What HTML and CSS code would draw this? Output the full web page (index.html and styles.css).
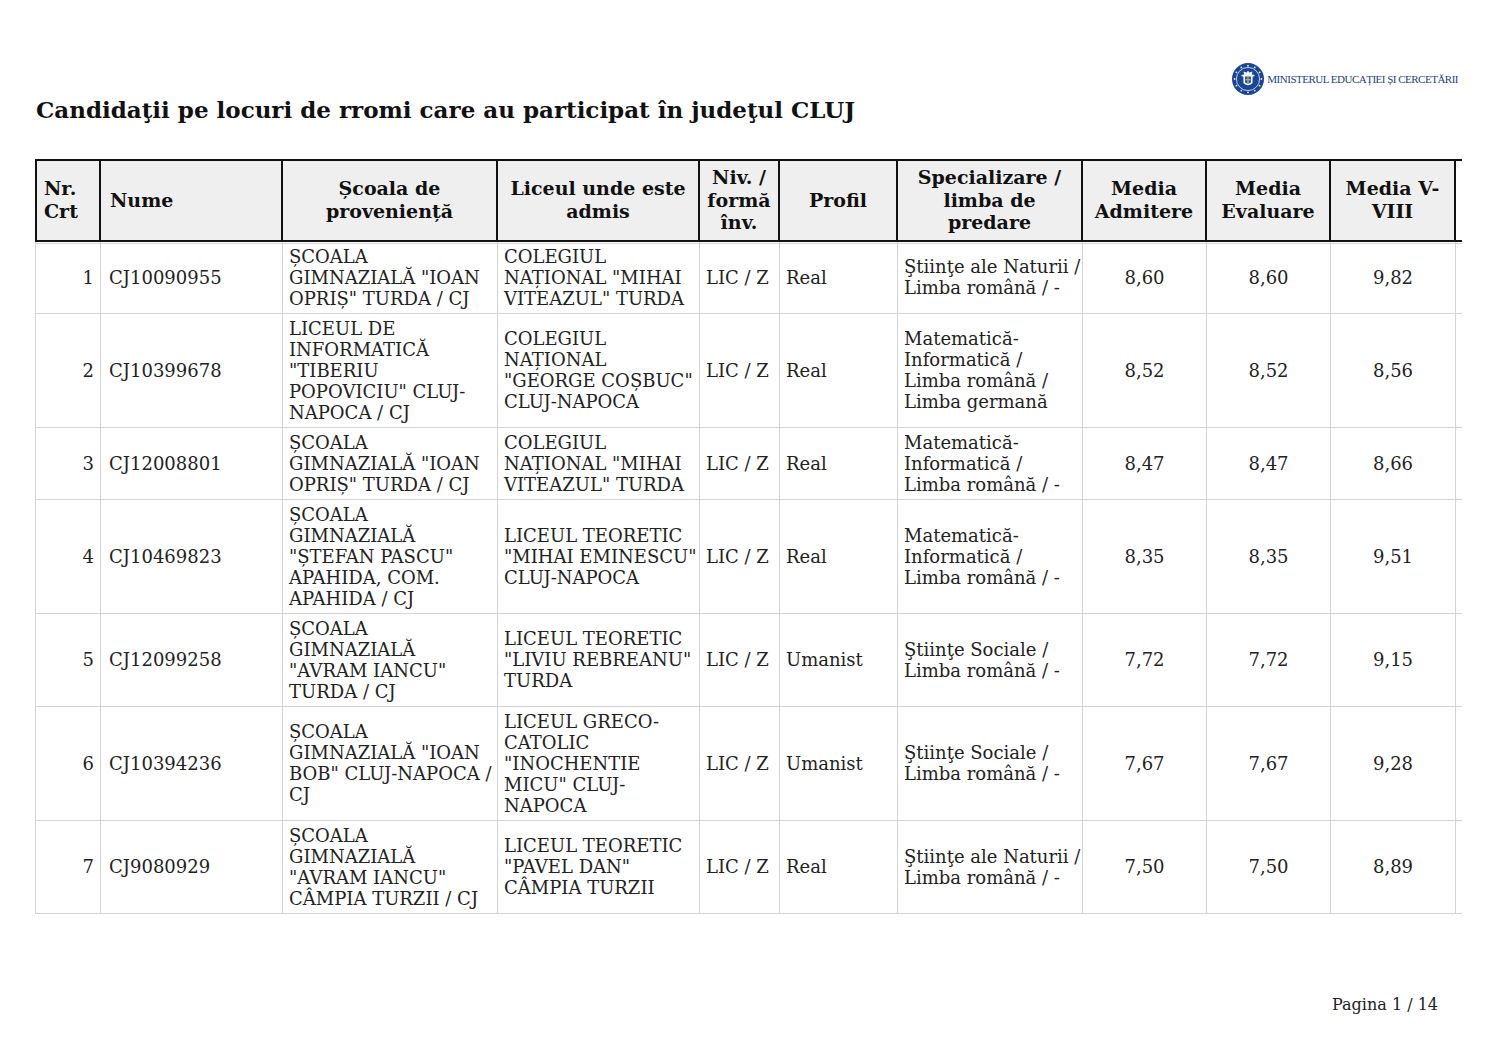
FILE: index.html
```html
<!DOCTYPE html>
<html lang="ro">
<head>
<meta charset="utf-8">
<title>Candidaţii pe locuri de rromi - CLUJ</title>
<link rel="stylesheet" href="styles.css">
</head>
<body>
<div class="page">
  <div class="brand">
    <svg class="emblem" viewBox="0 0 32 32" width="32" height="32" aria-hidden="true">
      <circle cx="16" cy="16" r="16" fill="#1a4595"/>
      <circle cx="16" cy="16" r="11.6" fill="none" stroke="#d5dff1" stroke-width="0.9"/>
      <g fill="#e6ecf7">
        <circle cx="16" cy="2.6" r="0.9"/><circle cx="22.7" cy="4.4" r="0.9"/><circle cx="27.6" cy="9.3" r="0.9"/>
        <circle cx="29.4" cy="16" r="0.9"/><circle cx="27.6" cy="22.7" r="0.9"/><circle cx="22.7" cy="27.6" r="0.9"/>
        <circle cx="16" cy="29.4" r="0.9"/><circle cx="9.3" cy="27.6" r="0.9"/><circle cx="4.4" cy="22.7" r="0.9"/>
        <circle cx="2.6" cy="16" r="0.9"/><circle cx="4.4" cy="9.3" r="0.9"/><circle cx="9.3" cy="4.4" r="0.9"/>
      </g>
      <path d="M16 7.5 L17.2 9.5 L20.5 8.6 L19.8 11.5 L23 12 L20.6 14.2 L20.6 20 Q16 24.5 11.4 20 L11.4 14.2 L9 12 L12.2 11.5 L11.5 8.6 L14.8 9.5 Z" fill="#f1f4fa"/>
      <path d="M13 13.5 H19 V19.2 Q16 22 13 19.2 Z" fill="#2a5aa8"/>
      <path d="M16 14 V20.5 M13.4 16.8 H18.6" stroke="#e9c84a" stroke-width="0.9"/>
    </svg>
    <span class="brand-name">MINISTERUL EDUCAȚIEI ȘI CERCETĂRII</span>
  </div>

  <h1 class="title">Candidaţii pe locuri de rromi care au participat în judeţul CLUJ</h1>

  <table class="results">
    <colgroup>
      <col class="c-nr"><col class="c-nume"><col class="c-scoala"><col class="c-liceu"><col class="c-niv"><col class="c-profil"><col class="c-spec"><col class="c-media"><col class="c-media"><col class="c-media3"><col class="c-cut">
    </colgroup>
    <thead>
      <tr>
        <th class="left">Nr.<br>Crt</th>
        <th class="left name-h">Nume</th>
        <th>Școala de<br>proveniență</th>
        <th>Liceul unde este<br>admis</th>
        <th>Niv. /<br>formă<br>înv.</th>
        <th>Profil</th>
        <th>Specializare /<br>limba de<br>predare</th>
        <th>Media<br>Admitere</th>
        <th>Media<br>Evaluare</th>
        <th>Media V-<br>VIII</th>
        <th class="cut"></th>
      </tr>
    </thead>
    <tbody>
      <tr>
        <td class="nr">1</td><td class="nume">CJ10090955</td>
        <td>ȘCOALA<br>GIMNAZIALĂ "IOAN<br>OPRIȘ" TURDA / CJ</td>
        <td>COLEGIUL<br>NAȚIONAL "MIHAI<br>VITEAZUL" TURDA</td>
        <td>LIC / Z</td><td>Real</td>
        <td>Ştiinţe ale Naturii /<br>Limba română / -</td>
        <td class="num">8,60</td><td class="num">8,60</td><td class="num">9,82</td><td class="cut"></td>
      </tr>
      <tr>
        <td class="nr">2</td><td class="nume">CJ10399678</td>
        <td>LICEUL DE<br>INFORMATICĂ<br>"TIBERIU<br>POPOVICIU" CLUJ-<br>NAPOCA / CJ</td>
        <td>COLEGIUL<br>NAȚIONAL<br>"GEORGE COȘBUC"<br>CLUJ-NAPOCA</td>
        <td>LIC / Z</td><td>Real</td>
        <td>Matematică-<br>Informatică /<br>Limba română /<br>Limba germană</td>
        <td class="num">8,52</td><td class="num">8,52</td><td class="num">8,56</td><td class="cut"></td>
      </tr>
      <tr>
        <td class="nr">3</td><td class="nume">CJ12008801</td>
        <td>ȘCOALA<br>GIMNAZIALĂ "IOAN<br>OPRIȘ" TURDA / CJ</td>
        <td>COLEGIUL<br>NAȚIONAL "MIHAI<br>VITEAZUL" TURDA</td>
        <td>LIC / Z</td><td>Real</td>
        <td>Matematică-<br>Informatică /<br>Limba română / -</td>
        <td class="num">8,47</td><td class="num">8,47</td><td class="num">8,66</td><td class="cut"></td>
      </tr>
      <tr>
        <td class="nr">4</td><td class="nume">CJ10469823</td>
        <td>ȘCOALA<br>GIMNAZIALĂ<br>"ȘTEFAN PASCU"<br>APAHIDA, COM.<br>APAHIDA / CJ</td>
        <td>LICEUL TEORETIC<br>"MIHAI EMINESCU"<br>CLUJ-NAPOCA</td>
        <td>LIC / Z</td><td>Real</td>
        <td>Matematică-<br>Informatică /<br>Limba română / -</td>
        <td class="num">8,35</td><td class="num">8,35</td><td class="num">9,51</td><td class="cut"></td>
      </tr>
      <tr>
        <td class="nr">5</td><td class="nume">CJ12099258</td>
        <td>ȘCOALA<br>GIMNAZIALĂ<br>"AVRAM IANCU"<br>TURDA / CJ</td>
        <td>LICEUL TEORETIC<br>"LIVIU REBREANU"<br>TURDA</td>
        <td>LIC / Z</td><td>Umanist</td>
        <td>Ştiinţe Sociale /<br>Limba română / -</td>
        <td class="num">7,72</td><td class="num">7,72</td><td class="num">9,15</td><td class="cut"></td>
      </tr>
      <tr>
        <td class="nr">6</td><td class="nume">CJ10394236</td>
        <td>ȘCOALA<br>GIMNAZIALĂ "IOAN<br>BOB" CLUJ-NAPOCA /<br>CJ</td>
        <td>LICEUL GRECO-<br>CATOLIC<br>"INOCHENTIE<br>MICU" CLUJ-<br>NAPOCA</td>
        <td>LIC / Z</td><td>Umanist</td>
        <td>Ştiinţe Sociale /<br>Limba română / -</td>
        <td class="num">7,67</td><td class="num">7,67</td><td class="num">9,28</td><td class="cut"></td>
      </tr>
      <tr>
        <td class="nr">7</td><td class="nume">CJ9080929</td>
        <td>ȘCOALA<br>GIMNAZIALĂ<br>"AVRAM IANCU"<br>CÂMPIA TURZII / CJ</td>
        <td>LICEUL TEORETIC<br>"PAVEL DAN"<br>CÂMPIA TURZII</td>
        <td>LIC / Z</td><td>Real</td>
        <td>Ştiinţe ale Naturii /<br>Limba română / -</td>
        <td class="num">7,50</td><td class="num">7,50</td><td class="num">8,89</td><td class="cut"></td>
      </tr>
    </tbody>
  </table>

  <footer class="footer">Pagina 1 / 14</footer>
</div>
</body>
</html>
```

FILE: styles.css
```css
* { box-sizing: border-box; }

html, body {
  margin: 0;
  padding: 0;
  background: #ffffff;
}

body {
  font-family: "DejaVu Serif", "Liberation Serif", serif;
  color: #222;
}

.page {
  width: 1497px;
  height: 1058px;
  display: flex;
  flex-direction: column;
  padding: 63px 39px 44px 35px;
  overflow: hidden;
}

.brand {
  display: flex;
  align-items: center;
  justify-content: flex-end;
  gap: 3px;
  height: 32px;
}

.emblem {
  display: block;
  flex: none;
}

.brand-name {
  font-family: "Liberation Serif", "DejaVu Serif", serif;
  font-size: 11px;
  letter-spacing: -0.5px;
  color: #1d3f86;
  white-space: nowrap;
}

.title {
  margin: 1px 0 0 1px;
  font-size: 23px;
  line-height: 27px;
  font-weight: bold;
  color: #111;
  white-space: nowrap;
}

.results {
  margin-top: 36px;
  border-collapse: separate;
  border-spacing: 0;
  table-layout: fixed;
  width: 1427px;
}

.c-nr { width: 66px; }
.c-nume { width: 182px; }
.c-scoala { width: 215px; }
.c-liceu { width: 202px; }
.c-niv { width: 80px; }
.c-profil { width: 118px; }
.c-spec { width: 185px; }
.c-media { width: 124px; }
.c-media3 { width: 125px; }
.c-cut { width: 6px; }

.results th {
  background: #efefef;
  font-size: 19px;
  line-height: 22.5px;
  font-weight: bold;
  text-align: center;
  vertical-align: middle;
  padding: 5px 6px 6px;
  border-top: 2px solid #111;
  border-bottom: 2px solid #111;
  border-right: 2px solid #111;
  white-space: nowrap;
  color: #111;
}

.results th:first-child {
  border-left: 2px solid #111;
}

.results th.left {
  text-align: left;
  padding-left: 7px;
}

.results th.cut {
  background: #fff;
  border-right: none;
  padding: 0;
}

.results td {
  font-size: 18px;
  line-height: 21px;
  padding: 4px 6px 4px;
  vertical-align: middle;
  text-align: left;
  white-space: nowrap;
  border-right: 1px solid #d4d4d4;
  border-bottom: 1px solid #d4d4d4;
}

.results td:first-child {
  border-left: 1px solid #d4d4d4;
}

.results tbody tr:first-child td {
  box-shadow: inset 0 1px 0 #ffffff, inset 0 2px 0 #d4d4d4;
  padding-top: 4px;
}

.results td.nr { text-align: right; }
.results td.nume { padding-left: 8px; }
.results th.name-h { padding-left: 9px; }
.results td.num { text-align: center; }
.results td.cut { border-right: none; padding: 0; }

.footer {
  margin-top: auto;
  align-self: flex-end;
  margin-right: 20px;
  font-size: 16px;
  line-height: 19px;
  color: #222;
}
```
